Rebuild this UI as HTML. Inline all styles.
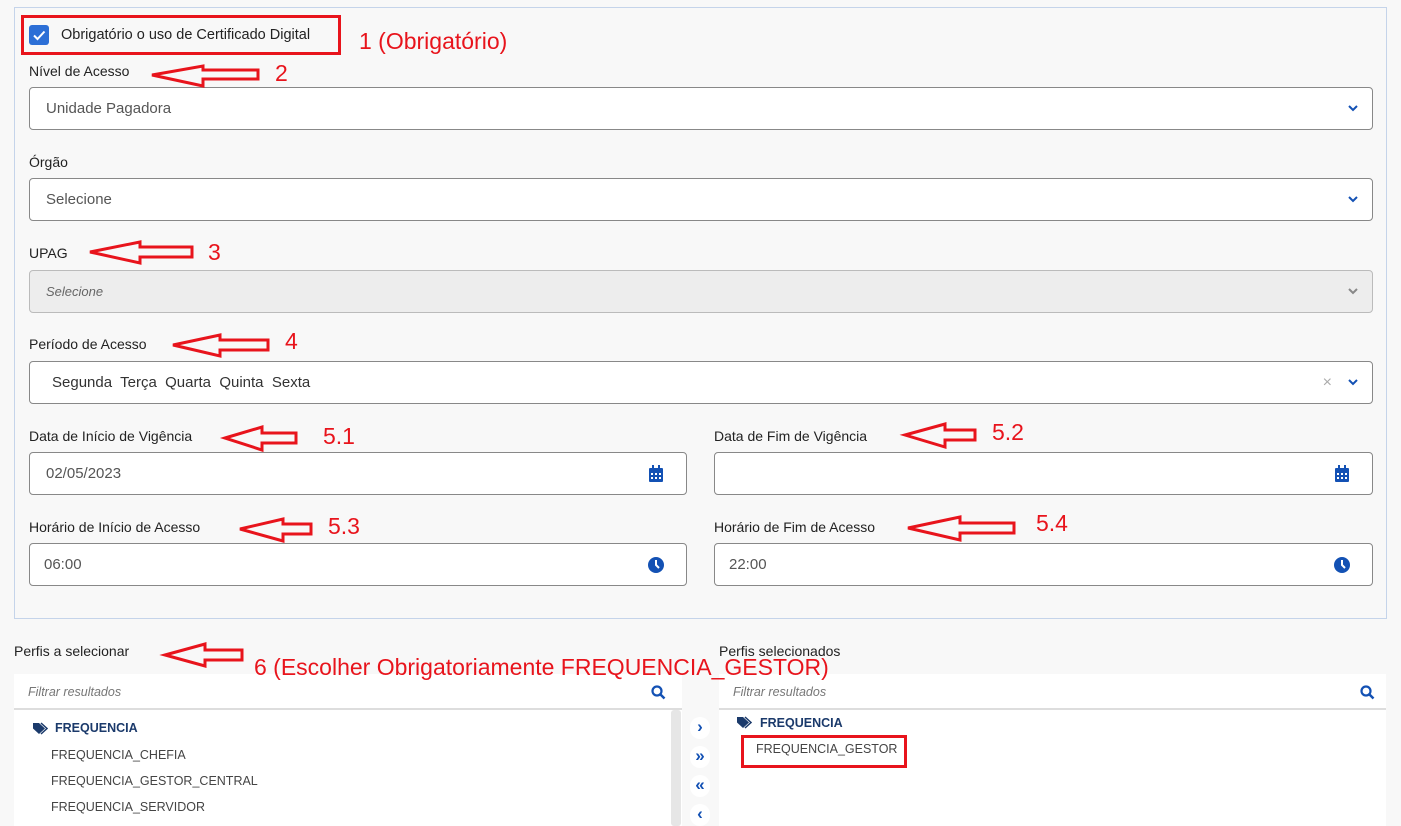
<!DOCTYPE html>
<html><head><meta charset="utf-8"><style>
*{box-sizing:border-box;margin:0;padding:0}
body{width:1401px;height:826px;overflow:hidden;background:#f8f8f8;font-family:"Liberation Sans",sans-serif;position:relative;color:#333}
.abs{position:absolute}
.panel{left:14px;top:7px;width:1373px;height:612px;border:1px solid #c5d4ea;background:#f8f8f8}
.lbl{font-size:14px;color:#222}
.inp{height:43px;border:1px solid #888;border-radius:4px;background:#fff;font-size:15px;color:#555;padding-left:16px;line-height:41px}
.chev{position:absolute;right:12px;top:13px}
.ann{color:#e8141c;font-size:23px}
.mb{position:absolute;left:690px;width:20px;height:22px;background:#fff;border-radius:10px;color:#1351b4;font-size:17px;font-weight:bold;text-align:center;line-height:20px}
</style></head><body>
<div class="abs panel"></div>
<div class="abs" style="left:29px;top:25px;width:20px;height:20px;background:#2c6fd6;border-radius:3px"></div>
<svg class="abs" style="left:29px;top:25px" width="20" height="20"><path d="M5 10.5l3.5 3.5 7-7.5" stroke="#fff" stroke-width="2" fill="none"/></svg>
<div class="abs lbl" style="left:61px;top:27px;font-size:14.5px">Obrigatório o uso de Certificado Digital</div>
<div class="abs" style="left:21px;top:15px;width:320px;height:40px;border:3px solid #e8141c"></div>
<div class="abs ann" style="left:359px;top:28px">1 (Obrigatório)</div>

<div class="abs lbl" style="left:29px;top:63px">Nível de Acesso</div>
<div class="abs inp" style="left:29px;top:87px;width:1344px">Unidade Pagadora<svg class="chev" width="14" height="14"><path d="M3 5l4 4 4-4" stroke="#1351b4" stroke-width="2" fill="none"/></svg></div>
<div class="abs lbl" style="left:29px;top:154px">Órgão</div>
<div class="abs inp" style="left:29px;top:178px;width:1344px">Selecione<svg class="chev" width="14" height="14"><path d="M3 5l4 4 4-4" stroke="#1351b4" stroke-width="2" fill="none"/></svg></div>
<div class="abs lbl" style="left:29px;top:245px">UPAG</div>
<div class="abs inp" style="left:29px;top:270px;width:1344px;background:#ededed;border-color:#bbb;font-style:italic;font-size:13px;color:#666">Selecione<svg class="chev" width="14" height="14"><path d="M3 5l4 4 4-4" stroke="#888" stroke-width="2" fill="none"/></svg></div>
<div class="abs lbl" style="left:29px;top:336px">Período de Acesso</div>
<div class="abs inp" style="left:29px;top:361px;width:1344px;padding-left:22px;color:#333">Segunda&nbsp; Terça&nbsp; Quarta&nbsp; Quinta&nbsp; Sexta<span style="position:absolute;right:40px;color:#aaa;font-size:16px">×</span><svg class="chev" width="14" height="14"><path d="M3 5l4 4 4-4" stroke="#1351b4" stroke-width="2" fill="none"/></svg></div>

<div class="abs lbl" style="left:29px;top:428px">Data de Início de Vigência</div>
<div class="abs lbl" style="left:714px;top:428px">Data de Fim de Vigência</div>
<div class="abs inp" style="left:29px;top:452px;width:658px">02/05/2023<svg class="chev" width="16" height="18" style="right:22px;top:12px"><rect x="1" y="3" width="14" height="14" rx="1" fill="#1351b4"/><rect x="4" y="0" width="2" height="4" fill="#1351b4"/><rect x="10" y="0" width="2" height="4" fill="#1351b4"/><g fill="#fff"><rect x="3" y="8" width="2" height="2"/><rect x="7" y="8" width="2" height="2"/><rect x="11" y="8" width="2" height="2"/><rect x="3" y="12" width="2" height="2"/><rect x="7" y="12" width="2" height="2"/><rect x="11" y="12" width="2" height="2"/></g></svg></div>
<div class="abs inp" style="left:714px;top:452px;width:659px"><svg class="chev" width="16" height="18" style="right:22px;top:12px"><rect x="1" y="3" width="14" height="14" rx="1" fill="#1351b4"/><rect x="4" y="0" width="2" height="4" fill="#1351b4"/><rect x="10" y="0" width="2" height="4" fill="#1351b4"/><g fill="#fff"><rect x="3" y="8" width="2" height="2"/><rect x="7" y="8" width="2" height="2"/><rect x="11" y="8" width="2" height="2"/><rect x="3" y="12" width="2" height="2"/><rect x="7" y="12" width="2" height="2"/><rect x="11" y="12" width="2" height="2"/></g></svg></div>

<div class="abs lbl" style="left:29px;top:519px">Horário de Início de Acesso</div>
<div class="abs lbl" style="left:714px;top:519px">Horário de Fim de Acesso</div>
<div class="abs inp" style="left:29px;top:543px;width:658px;padding-left:14px">06:00<svg class="chev" width="18" height="18" style="right:21px;top:12px"><circle cx="9" cy="9" r="8" fill="#1351b4"/><path d="M9 4v5l3 3" stroke="#fff" stroke-width="2" fill="none"/></svg></div>
<div class="abs inp" style="left:714px;top:543px;width:659px;padding-left:14px">22:00<svg class="chev" width="18" height="18" style="right:21px;top:12px"><circle cx="9" cy="9" r="8" fill="#1351b4"/><path d="M9 4v5l3 3" stroke="#fff" stroke-width="2" fill="none"/></svg></div>

<div class="abs lbl" style="left:14px;top:643px">Perfis a selecionar</div>
<div class="abs lbl" style="left:719px;top:643px">Perfis selecionados</div>
<div class="abs" style="left:14px;top:674px;width:668px;height:152px;background:#fff"></div>
<div class="abs" style="left:14px;top:708px;width:668px;height:2px;background:#ddd"></div>
<div class="abs" style="left:671px;top:710px;width:10px;height:116px;background:#e6e6e6;border-radius:3px"></div>
<div class="abs" style="left:28px;top:685px;font-size:12.5px;font-style:italic;color:#777">Filtrar resultados</div>
<div class="abs" style="left:719px;top:674px;width:667px;height:152px;background:#fff"></div>
<div class="abs" style="left:719px;top:708px;width:667px;height:2px;background:#ddd"></div>
<div class="abs" style="left:733px;top:685px;font-size:12.5px;font-style:italic;color:#777">Filtrar resultados</div>
<svg class="abs" style="left:651px;top:685px" width="15" height="15"><circle cx="6" cy="6" r="4.5" stroke="#1351b4" stroke-width="2.2" fill="none"/><path d="M9.5 9.5l4 4" stroke="#1351b4" stroke-width="2.5"/></svg>
<svg class="abs" style="left:1360px;top:685px" width="15" height="15"><circle cx="6" cy="6" r="4.5" stroke="#1351b4" stroke-width="2.2" fill="none"/><path d="M9.5 9.5l4 4" stroke="#1351b4" stroke-width="2.5"/></svg>

<svg class="abs" style="left:32px;top:722px" width="16" height="13"><path d="M1 1h6l6 5.5-6 5.5-6-5.5z" fill="#1b3a6b"/><path d="M9 1l6 5.5-6 5.5" stroke="#1b3a6b" stroke-width="1.5" fill="none"/></svg>
<div class="abs" style="left:55px;top:721px;font-size:12.5px;font-weight:bold;color:#1b3a6b">FREQUENCIA</div>
<div class="abs" style="left:51px;top:748px;font-size:12.5px;color:#444">FREQUENCIA_CHEFIA</div>
<div class="abs" style="left:51px;top:774px;font-size:12.5px;color:#444">FREQUENCIA_GESTOR_CENTRAL</div>
<div class="abs" style="left:51px;top:800px;font-size:12.5px;color:#444">FREQUENCIA_SERVIDOR</div>

<svg class="abs" style="left:736px;top:716px" width="16" height="13"><path d="M1 1h6l6 5.5-6 5.5-6-5.5z" fill="#1b3a6b"/><path d="M9 1l6 5.5-6 5.5" stroke="#1b3a6b" stroke-width="1.5" fill="none"/></svg>
<div class="abs" style="left:760px;top:716px;font-size:12.5px;font-weight:bold;color:#1b3a6b">FREQUENCIA</div>
<div class="abs" style="left:756px;top:742px;font-size:12.5px;color:#444">FREQUENCIA_GESTOR</div>
<div class="abs" style="left:741px;top:735px;width:166px;height:33px;border:3px solid #e8141c"></div>

<div class="mb" style="top:717px">›</div>
<div class="mb" style="top:746px">»</div>
<div class="mb" style="top:775px">«</div>
<div class="mb" style="top:804px">‹</div>

<div class="abs ann" style="left:254px;top:654px">6 (Escolher Obrigatoriamente FREQUENCIA_GESTOR)</div>
<div class="abs ann" style="left:275px;top:60px">2</div>
<div class="abs ann" style="left:208px;top:239px">3</div>
<div class="abs ann" style="left:285px;top:328px">4</div>
<div class="abs ann" style="left:323px;top:423px">5.1</div>
<div class="abs ann" style="left:992px;top:419px">5.2</div>
<div class="abs ann" style="left:328px;top:513px">5.3</div>
<div class="abs ann" style="left:1036px;top:510px">5.4</div>

<svg class="abs" style="left:0;top:0" width="1401" height="826"><g stroke="#e8141c" stroke-width="3" fill="none" stroke-linejoin="miter">
<polygon points="152,75 203,66 203,70 258,70 258,79 203,79 203,86"/>
<polygon points="90,252 140,242 140,247 192,247 192,257 140,257 140,263"/>
<polygon points="173,345 220,335 220,340 268,340 268,350 220,350 220,356"/>
<polygon points="225,438 262,427 262,433 296,433 296,443 262,443 262,450"/>
<polygon points="905,435 945,424 945,430 975,430 975,440 945,440 945,447"/>
<polygon points="240,529 283,519 283,524 311,524 311,534 283,534 283,541"/>
<polygon points="908,528 960,517 960,523 1014,523 1014,533 960,533 960,540"/>
<polygon points="165,655 205,644 205,650 242,650 242,660 205,660 205,666"/>
</g></svg>
</body></html>
